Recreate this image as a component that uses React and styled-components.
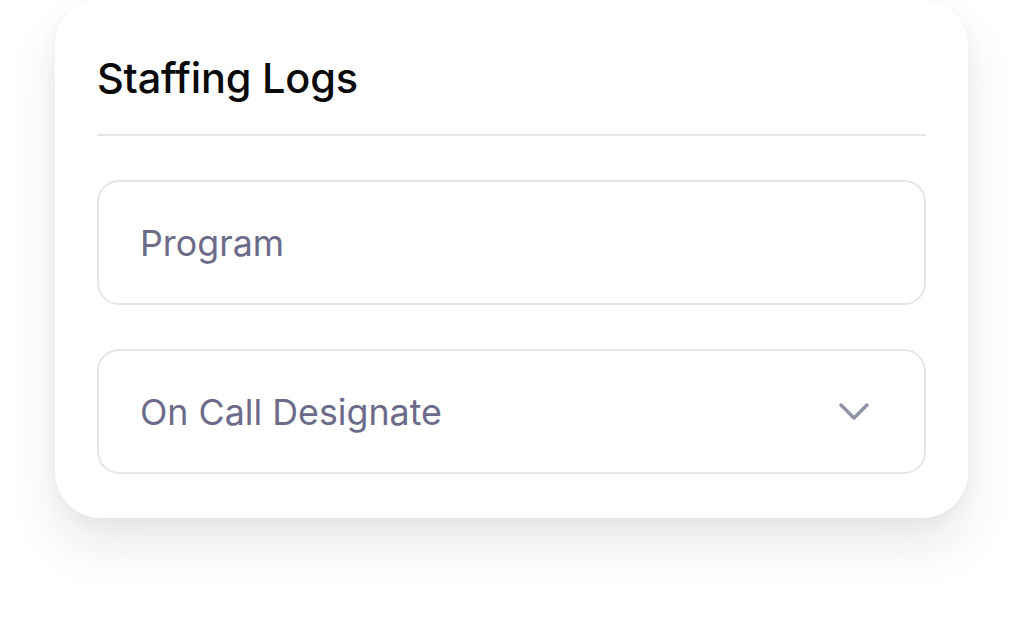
import React from "react";
import styled, { createGlobalStyle } from "styled-components";

const Global = createGlobalStyle`
  html, body { margin: 0; padding: 0; background: #ffffff; }
  body { font-family: Inter, "Noto Sans", sans-serif; }
  * { box-sizing: border-box; }
`;

const Page = styled.div`
  width: 1022px;
  height: 626px;
  overflow: hidden;
  padding-left: 55px;
`;

const Card = styled.section`
  width: 913px;
  background: #ffffff;
  border-radius: 46px;
  padding: 54px 42px 44px;
  box-shadow: 0 28px 50px rgba(30, 35, 50, 0.1), 0 4px 20px rgba(30, 35, 50, 0.04);
  display: flex;
  flex-direction: column;
  gap: 44px;
`;

const Header = styled.header`
  padding-bottom: 32px;
  border-bottom: 2px solid #e6e6e8;
`;

const Title = styled.h1`
  margin: 0;
  font-size: 41.5px;
  line-height: 48px;
  font-weight: 500;
  color: #0a0a0a;
  letter-spacing: -0.2px;
`;

const Field = styled.div`
  height: 125px;
  border: 2px solid #e6e6e8;
  border-radius: 22px;
  display: flex;
  align-items: center;
  justify-content: space-between;
  padding: 0 54px 0 41px;
`;

const Label = styled.span`
  font-size: 35.8px;
  font-weight: 400;
  color: #6c6b8a;
`;

const Chevron = () => (
  <svg width="32" height="20" viewBox="0 0 32 20" fill="none">
    <path d="M3 3 L16 16 L29 3" stroke="#8e94a4" strokeWidth="3.4" strokeLinecap="round" strokeLinejoin="round" />
  </svg>
);

export default function App() {
  return (
    <>
      <Global />
      <Page>
        <Card>
          <Header>
            <Title>Staffing Logs</Title>
          </Header>
          <Field>
            <Label>Program</Label>
          </Field>
          <Field>
            <Label>On Call Designate</Label>
            <Chevron />
          </Field>
        </Card>
      </Page>
    </>
  );
}
